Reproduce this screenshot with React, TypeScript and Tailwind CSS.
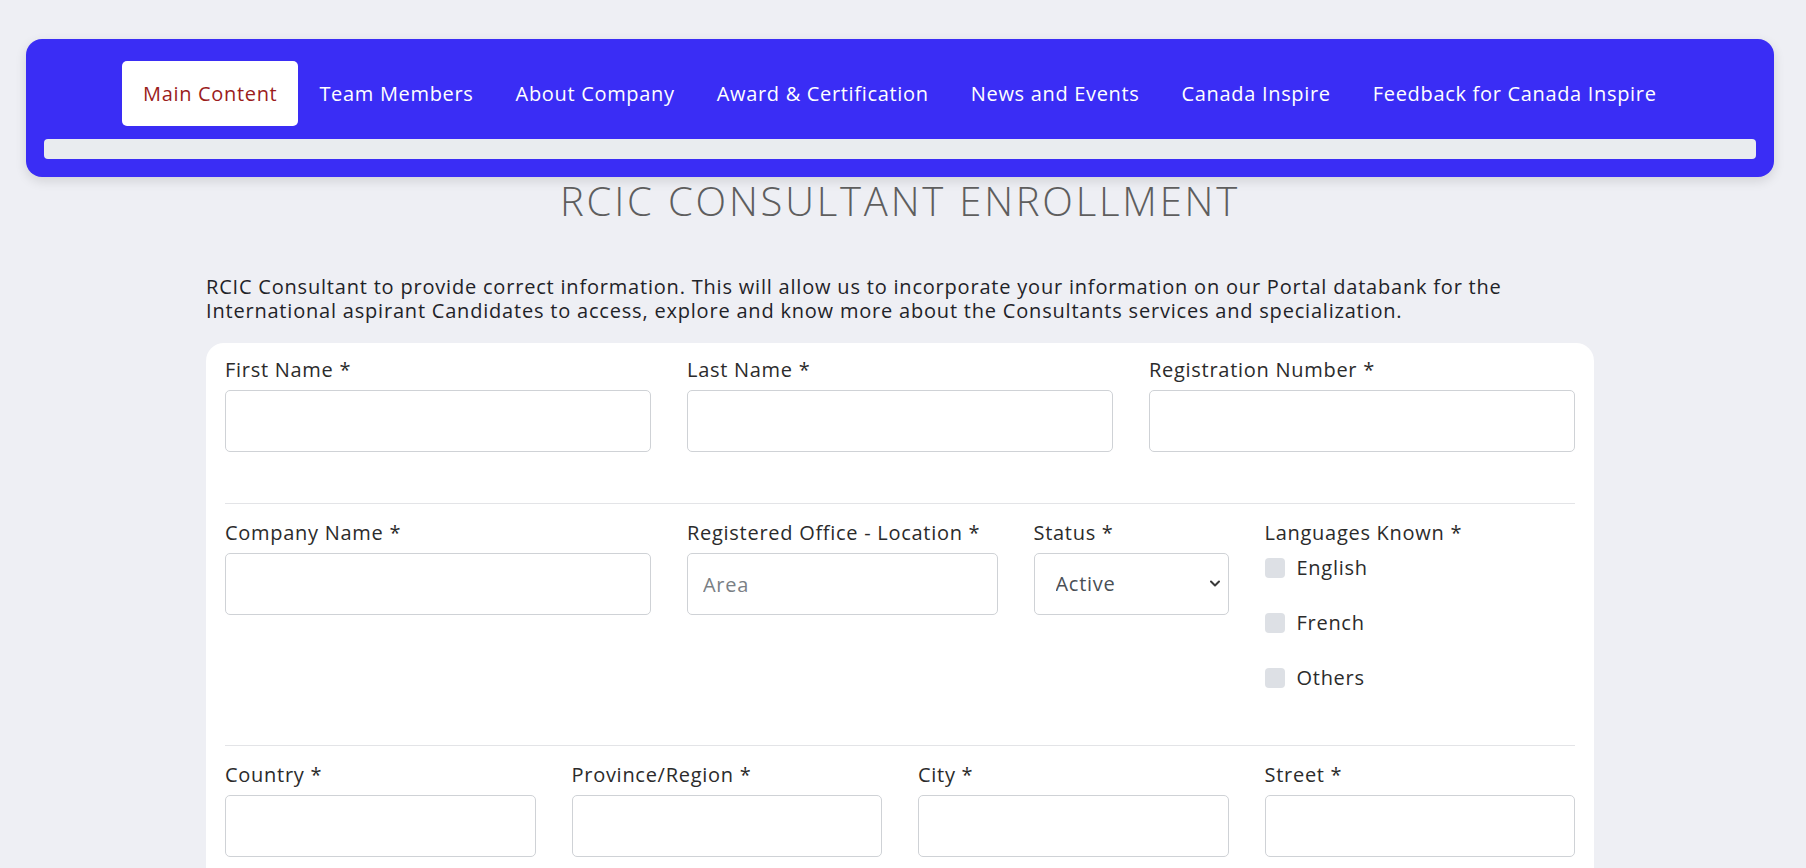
import { useState } from "react";

const navItems = [
  "Main Content",
  "Team Members",
  "About Company",
  "Award & Certification",
  "News and Events",
  "Canada Inspire",
  "Feedback for Canada Inspire",
];

const languages = ["English", "French", "Others"];

function Field({ label, placeholder, span }: { label: string; placeholder?: string; span: string }) {
  return (
    <div className={span}>
      <label className="block text-[20px] leading-[30px] tracking-[0.72px] text-[#2b2b2b]">{label}</label>
      <input
        type="text"
        placeholder={placeholder}
        className="mt-[5px] h-[62px] w-full rounded-[5px] border border-[#cfd2d6] bg-white px-[15px] text-[20px] tracking-[0.72px] text-[#333] placeholder:text-[#7a7f85] outline-none"
      />
    </div>
  );
}

export default function App() {
  const [active, setActive] = useState(0);
  const [checked, setChecked] = useState<boolean[]>([false, false, false]);

  return (
    <div className="min-h-screen bg-[#eeeff4] font-['Open_Sans',sans-serif]">
      <div className="w-[1800px] pt-[39px]">
        {/* Top navigation */}
        <nav className="mx-[26px] rounded-[16px] bg-[#3a2df5] pt-[22px] pb-[18px] shadow-[0_4px_12px_rgba(0,0,0,0.12)]">
          <ul className="flex pl-[96px]">
            {navItems.map((item, i) => (
              <li key={item}>
                <button
                  onClick={() => setActive(i)}
                  className={`flex h-[65px] items-center rounded-[5px] px-[21px] text-[20px] tracking-[0.68px] ${
                    active === i ? "bg-white text-[#9b1c1c]" : "text-white"
                  }`}
                >
                  {item}
                </button>
              </li>
            ))}
          </ul>
          <div className="mx-[18px] mt-[13px] h-[20px] rounded-[4px] bg-[#e9ecef]" />
        </nav>

        <h1 className="text-center text-[40px] font-light leading-[48px] tracking-[2.8px] text-[#5e5e5e]">
          RCIC CONSULTANT ENROLLMENT
        </h1>

        <div className="mx-auto w-[1388px]">
          <p className="mt-[50px] text-[20px] leading-[24px] tracking-[0.8px] text-[#1f2328]">
            RCIC Consultant to provide correct information. This will allow us to incorporate your information on our
            Portal databank for the International aspirant Candidates to access, explore and know more about the
            Consultants services and specialization.
          </p>

          {/* Enrollment form */}
          <form className="mt-[20px] rounded-[18px] bg-white px-[19px] pt-[12px] pb-[40px]">
            <div className="grid grid-cols-12 gap-x-[36px]">
              <Field label="First Name *" span="col-span-4" />
              <Field label="Last Name *" span="col-span-4" />
              <Field label="Registration Number *" span="col-span-4" />
            </div>

            <hr className="mt-[51px] border-t border-[#e3e4e7]" />

            <div className="grid grid-cols-12 gap-x-[36px] pt-[14px]">
              <Field label="Company Name *" span="col-span-4" />
              <Field label="Registered Office - Location *" placeholder="Area" span="col-span-3" />
              <div className="col-span-2">
                <label className="block text-[20px] leading-[30px] tracking-[0.72px] text-[#2b2b2b]">Status *</label>
                <div className="relative mt-[5px]">
                  <select className="h-[62px] w-full appearance-none rounded-[5px] border border-[#cfd2d6] bg-white pl-[21px] text-[20px] tracking-[0.72px] text-[#4a4f55] outline-none">
                    <option>Active</option>
                    <option>Inactive</option>
                  </select>
                  <svg
                    className="pointer-events-none absolute right-[9px] top-[27px]"
                    width="10"
                    height="7"
                    viewBox="0 0 10 7"
                    fill="none"
                  >
                    <path d="M1 1.5l4 4 4-4" stroke="#3a3a3a" strokeWidth="2" strokeLinecap="round" strokeLinejoin="round" />
                  </svg>
                </div>
              </div>
              <div className="col-span-3">
                <label className="block text-[20px] leading-[30px] tracking-[0.72px] text-[#2b2b2b]">Languages Known *</label>
                <div className="flex flex-col gap-[15px]">
                  {languages.map((lang, i) => (
                    <label
                      key={lang}
                      className="flex h-[40px] items-center gap-[12px] text-[20px] tracking-[0.72px] text-[#2b2b2b]"
                    >
                      <input
                        type="checkbox"
                        checked={checked[i]}
                        onChange={() =>
                          setChecked((prev) => prev.map((v, j) => (j === i ? !v : v)))
                        }
                        className="h-[20px] w-[20px] appearance-none rounded-[4px] bg-[#dde0e5] checked:bg-[#3a2df5]"
                      />
                      {lang}
                    </label>
                  ))}
                </div>
              </div>
            </div>

            <hr className="mt-[47px] border-t border-[#e3e4e7]" />

            <div className="grid grid-cols-12 gap-x-[36px] pt-[14px]">
              <Field label="Country *" span="col-span-3" />
              <Field label="Province/Region *" span="col-span-3" />
              <Field label="City *" span="col-span-3" />
              <Field label="Street *" span="col-span-3" />
            </div>
          </form>
        </div>
      </div>
    </div>
  );
}
